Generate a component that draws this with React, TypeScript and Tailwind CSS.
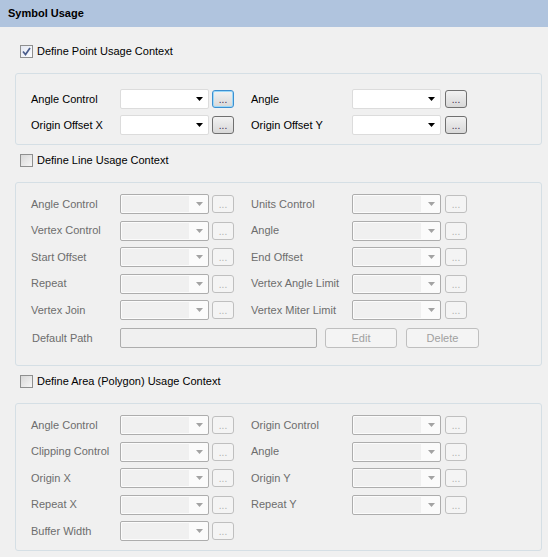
const font = { fontFamily: '"Liberation Sans", Arial, sans-serif' };

type Pair = [string, string | null];

const pointRows: Pair[] = [
  ['Angle Control', 'Angle'],
  ['Origin Offset X', 'Origin Offset Y'],
];

const lineRows: Pair[] = [
  ['Angle Control', 'Units Control'],
  ['Vertex Control', 'Angle'],
  ['Start Offset', 'End Offset'],
  ['Repeat', 'Vertex Angle Limit'],
  ['Vertex Join', 'Vertex Miter Limit'],
];

const areaRows: Pair[] = [
  ['Angle Control', 'Origin Control'],
  ['Clipping Control', 'Angle'],
  ['Origin X', 'Origin Y'],
  ['Repeat X', 'Repeat Y'],
  ['Buffer Width', null],
];

const Arrow = ({ enabled }: { enabled: boolean }) => (
  <svg width="7" height="4" viewBox="0 0 7 4" className="shrink-0">
    <path d="M0 0 H7 L3.5 4 Z" fill={enabled ? '#000000' : '#a3a3a3'} />
  </svg>
);

const Combo = ({ enabled }: { enabled: boolean }) =>
  enabled ? (
    <div className="w-[89px] h-[20px] flex items-center justify-end pr-[5px] bg-white border border-[#dcdcdc] rounded-[2px]">
      <Arrow enabled />
    </div>
  ) : (
    <div className="w-[89px] h-[20px] flex items-center p-px bg-[#fbfbfb] border border-[#adadad] rounded-[2px]">
      <div className="w-[67px] h-[16px] bg-[#f0f0f0]" />
      <div className="flex-1 flex justify-end pr-[4px]">
        <Arrow enabled={false} />
      </div>
    </div>
  );

const DotsButton = ({ enabled, focused }: { enabled: boolean; focused?: boolean }) => {
  if (!enabled) {
    return (
      <div className="w-[22px] h-[18px] flex items-end justify-center pb-[2px] border border-[#bfbfbf] rounded-[3px] bg-[#f4f4f4] text-[10px] leading-none text-[#b0b0b0]">
        ...
      </div>
    );
  }
  return (
    <div
      className={
        'w-[22px] h-[18px] flex items-end justify-center pb-[2px] rounded-[3px] bg-linear-to-b from-[#f2f2f2] to-[#d8d8d8] text-[10px] leading-none text-[#3a1f4a] border ' +
        (focused ? 'border-[#3c8fd0] shadow-[inset_0_0_0_1px_#9ad8f8]' : 'border-[#707070]')
      }
    >
      ...
    </div>
  );
};

const Row = ({ pair, enabled, focusFirst }: { pair: Pair; enabled: boolean; focusFirst?: boolean }) => {
  const label = enabled ? 'text-black' : 'text-[#6d6d6d]';
  return (
    <div className="flex items-center h-[20px]">
      <span className={`w-[89px] ${label}`}>{pair[0]}</span>
      <Combo enabled={enabled} />
      <div className="ml-[3px]">
        <DotsButton enabled={enabled} focused={focusFirst} />
      </div>
      {pair[1] && (
        <>
          <span className={`ml-[17px] w-[101px] ${label}`}>{pair[1]}</span>
          <Combo enabled={enabled} />
          <div className="ml-[4px]">
            <DotsButton enabled={enabled} />
          </div>
        </>
      )}
    </div>
  );
};

const CheckBox = ({ checked, label }: { checked: boolean; label: string }) => (
  <div className="flex items-center h-[13px] ml-[20px] mt-[9px]">
    <div
      className={
        'w-[13px] h-[13px] border border-[#8e8f8f] flex items-center justify-center ' +
        (checked
          ? 'bg-linear-to-br from-[#e4e8f2] to-[#fbfcfe]'
          : 'bg-linear-to-br from-[#d8d8d8] to-[#f6f6f6]')
      }
    >
      {checked && (
        <svg width="9" height="9" viewBox="0 0 9 9">
          <path d="M1 4.5 L3.5 7.5 L8 1" fill="none" stroke="#4a5d8c" strokeWidth="1.7" />
        </svg>
      )}
    </div>
    <span className="ml-[4px] text-black">{label}</span>
  </div>
);

const Group = ({ children, className }: { children: React.ReactNode; className: string }) => (
  <div className={`ml-[15px] mr-[6px] mt-[15px] border border-[#d5dfe5] rounded-[3px] pl-[15px] flex flex-col ${className}`}>
    {children}
  </div>
);

export default function App() {
  return (
    <div className="w-[548px] h-[557px] bg-[#f0f0f0] text-[11px] leading-[13px] overflow-hidden" style={font}>
      <div className="h-[27px] bg-[#b0c4de] flex items-center pl-[8px] font-bold text-black">Symbol Usage</div>

      <div className="pt-[9px]">
        <CheckBox checked label="Define Point Usage Context" />
      </div>
      <Group className="pt-[15px] pb-[9px] gap-[6px]">
        {pointRows.map((p, i) => (
          <Row key={i} pair={p} enabled focusFirst={i === 0} />
        ))}
      </Group>

      <CheckBox checked={false} label="Define Line Usage Context" />
      <Group className="pt-[11px] pb-[17px] gap-[6.5px]">
        {lineRows.map((p, i) => (
          <Row key={i} pair={p} enabled={false} />
        ))}
        <div className="flex items-center h-[20px] mt-[1.5px]">
          <span className="w-[89px] pl-px text-[#6d6d6d]">Default Path</span>
          <div className="w-[197px] h-[20px] border border-[#adadad] rounded-[2px] bg-[#f0f0f0]" />
          <div className="ml-[8px] w-[72px] h-[20px] flex items-center justify-center border border-[#bfbfbf] rounded-[3px] bg-[#f4f4f4] text-[#a0a0a0]">
            Edit
          </div>
          <div className="ml-[9px] w-[73px] h-[20px] flex items-center justify-center border border-[#bfbfbf] rounded-[3px] bg-[#f4f4f4] text-[#a0a0a0]">
            Delete
          </div>
        </div>
      </Group>

      <CheckBox checked={false} label="Define Area (Polygon) Usage Context" />
      <Group className="pt-[11px] pb-[9px] gap-[6.5px]">
        {areaRows.map((p, i) => (
          <Row key={i} pair={p} enabled={false} />
        ))}
      </Group>
    </div>
  );
}
